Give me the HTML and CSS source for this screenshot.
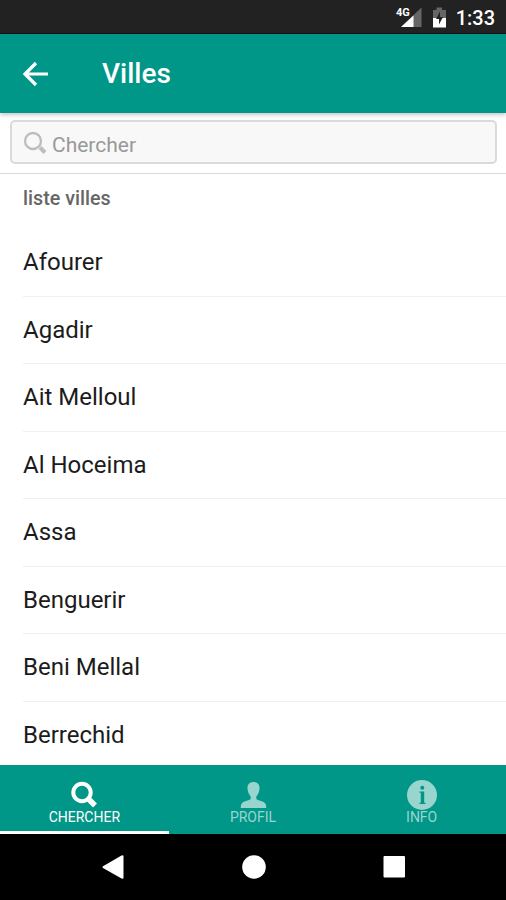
FILE: index.html
```html
<!DOCTYPE html>
<html lang="fr">
<head>
<meta charset="utf-8">
<title>Villes</title>
<link rel="stylesheet" href="styles.css">
</head>
<body>
<div class="screen">
  <div class="status">
    <svg class="status-icons" width="54" height="33" viewBox="0 0 54 33">
      <path fill="#666" d="M25.500 7.500V27H5z"/>
      <path fill="#fff" d="M17.500 15.500V27H5z"/>
      <path fill="#666" d="M37 10h3.500V7.500h5.500V10h4v8H37z"/>
      <path fill="#fff" d="M37 18h13v9.500H37z"/>
      <path fill="#222" d="M44 11.500 40 19h3v5.500l4-7.500h-3z"/>
      <text class="network" x="0" y="16">4G</text>
    </svg>
    <span class="clock">1:33</span>
  </div>
  <header class="header">
    <svg class="back" width="26" height="26" viewBox="0 0 26 26">
      <path d="M26 13H3.500M14 2 3 13l11 11" fill="none" stroke="#fff" stroke-width="3.200"/>
    </svg>
    <h1>Villes</h1>
  </header>
  <div class="search">
    <div class="field">
      <svg width="24" height="24" viewBox="0 0 24 24" fill="none" stroke="#bdbdbd">
        <circle cx="10" cy="10" r="8" stroke-width="2.300"/>
        <path d="M17 16.500l5 5" stroke-width="4"/>
      </svg>
      <span>Chercher</span>
    </div>
  </div>
  <main class="list">
    <h2>liste villes</h2>
    <ul>
      <li>Afourer</li>
      <li>Agadir</li>
      <li>Ait Melloul</li>
      <li>Al Hoceima</li>
      <li>Assa</li>
      <li>Benguerir</li>
      <li>Beni Mellal</li>
      <li>Berrechid</li>
    </ul>
  </main>
  <nav class="tabs">
    <div class="tab active">
      <svg width="30" height="30" viewBox="0 0 30 30" fill="none" stroke="currentColor">
        <circle cx="13" cy="12.500" r="8.700" stroke-width="4"/>
        <path d="M19 18.500l7 7" stroke-width="5.500"/>
      </svg>
      <span>CHERCHER</span>
    </div>
    <div class="tab">
      <svg width="30" height="30" viewBox="0 0 30 30" fill="currentColor">
        <path d="M15.500 2c4 0 6.300 2.500 6 6.500-.2 3-1 5.500-2.700 7.300-.8 1-.7 3.200.2 3.800 1.500 1.100 8 1.500 9 5.500.2.800.2 1.900.2 2.900H2.800c0-1 0-2.100.2-2.900 1-4 7.500-4.400 9-5.500.9-.6 1-2.800.2-3.800C10.500 14 9.700 11.500 9.500 8.500c-.3-4 2-6.500 6-6.500z"/>
      </svg>
      <span>PROFIL</span>
    </div>
    <div class="tab">
      <svg width="30" height="30" viewBox="0 0 30 30">
        <circle cx="15" cy="15" r="15" fill="currentColor"/>
        <circle cx="15.300" cy="7.700" r="2" fill="#009688"/>
        <path fill="#009688" d="M12.500 11.500h4.700V22.700h1.300V24h-6v-1.300h1.300V12.800h-1.300z"/>
      </svg>
      <span>INFO</span>
    </div>
  </nav>
  <div class="system">
    <svg width="24" height="24" viewBox="0 0 24 24"><path fill="#fff" d="M2 11.200 20.500.4Q22.500-.2 22.500 1.500v21q0 1.700-2 1.100L2 12.900Q.8 12 2 11.200z"/></svg>
    <svg width="24" height="24" viewBox="0 0 24 24"><circle cx="12" cy="12" r="11.800" fill="#fff"/></svg>
    <svg width="24" height="24" viewBox="0 0 24 24"><rect x="1.500" y="1" width="21.500" height="21.500" rx="1" fill="#fff"/></svg>
  </div>
</div>
</body>
</html>
```
FILE: styles.css
```css
* { box-sizing: border-box; }
body {
  margin: 0;
  background: #fff;
  font-family: Roboto, "Liberation Sans", sans-serif;
}
.screen {
  display: flex;
  flex-direction: column;
  width: 506px;
  height: 900px;
  overflow: hidden;
}
svg { display: block; flex: none; }
.status {
  flex: none;
  display: flex;
  justify-content: flex-end;
  height: 34px;
  padding-right: 11px;
  background: #222;
  border-bottom: 1px solid #111;
  color: #fff;
}
.network { fill: #fff; font-size: 11px; font-weight: 700; }
.status-icons { margin-right: 6px; overflow: visible; }
.clock { font-size: 20px; font-weight: 500; line-height: 36px; }
.header {
  position: relative;
  flex: none;
  display: flex;
  align-items: center;
  height: 79px;
  padding: 0 22px;
  background: #009688;
  box-shadow: 0 2px 4px rgba(0, 0, 0, .22);
  color: #fff;
}
.header h1 {
  margin: 1px 0 0 54px;
  font-size: 28px;
  font-weight: 500;
  line-height: 34px;
}
.search {
  flex: none;
  height: 61px;
  padding: 7px 9px 0 10px;
  border-bottom: 1px solid #dadada;
}
.field {
  display: flex;
  align-items: center;
  height: 44px;
  padding-left: 11px;
  background: #f8f8f8;
  border: 2px solid #dadada;
  border-radius: 5px;
  color: #999;
  font-size: 21px;
}
.field svg { margin-top: 2px; }
.field span { margin: 6px 0 0 5px; }
.list { flex: 1; min-height: 0; overflow: hidden; }
.list h2 {
  height: 55px;
  margin: 0;
  padding-left: 23px;
  color: #666;
  font-size: 19.7px;
  font-weight: 500;
  line-height: 50px;
}
.list ul { margin: 0; padding: 0 0 0 23px; list-style: none; }
.list li {
  height: 67.5px;
  border-bottom: 1px solid #efefef;
  color: #1c1c1c;
  font-size: 24px;
  line-height: 66px;
}
.tabs {
  flex: none;
  display: grid;
  grid-template-columns: repeat(3, 1fr);
  height: 69px;
  background: #009688;
}
.tab {
  display: flex;
  flex-direction: column;
  align-items: center;
  padding-top: 15px;
  border-bottom: 3px solid transparent;
  color: #99d5cf;
  font-size: 14px;
  line-height: 14px;
}
.tab.active { border-color: #fff; color: #fff; }
.system {
  flex: none;
  display: flex;
  justify-content: space-between;
  height: 66px;
  padding: 21px 100px 0 101px;
  background: #000;
}
```
